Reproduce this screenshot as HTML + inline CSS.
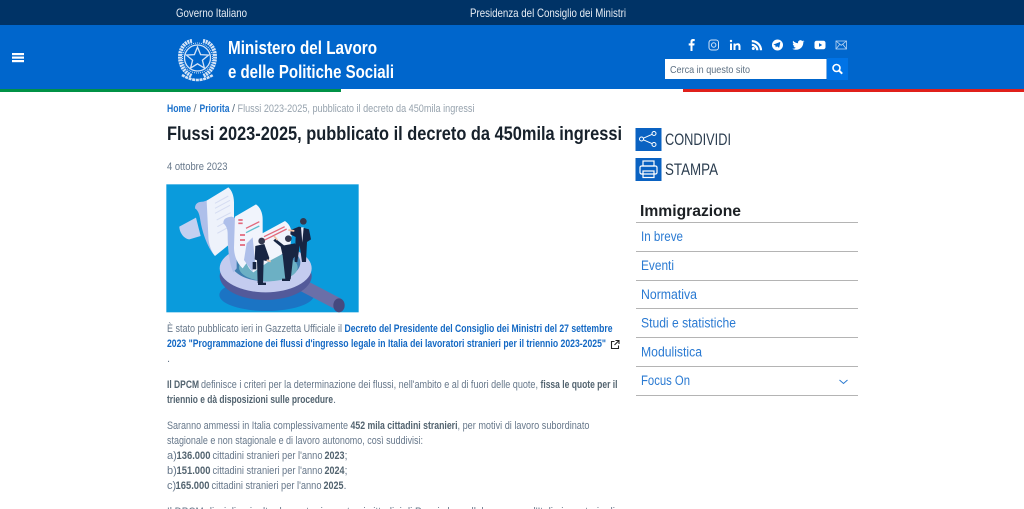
<!DOCTYPE html>
<html lang="it"><head><meta charset="utf-8"><title>Flussi 2023-2025, pubblicato il decreto da 450mila ingressi</title>
<style>
html,body{margin:0;padding:0;background:#fff;width:1024px;height:509px;overflow:hidden}
svg{display:block;filter:blur(.3px)}
text{font-family:"Liberation Sans",sans-serif;white-space:pre}
.b{font-size:11px;fill:#66778a}
.k{font-size:11px;font-weight:bold;fill:#52636f}
.l{font-size:11px;font-weight:bold;fill:#1469c4}
.n{font-size:13.5px;fill:#2a7ad2}
</style></head><body>
<svg width="1024" height="509" viewBox="0 0 1024 509" xmlns="http://www.w3.org/2000/svg">
<rect width="1024" height="25" fill="#003366"/>
<rect y="25" width="1024" height="64" fill="#0066cc"/>
<rect y="89" width="341" height="3" fill="#009246"/>
<rect x="683" y="89" width="341" height="3" fill="#e0201b"/>
<g font-size="12">
<text x="176" y="17" textLength="71" lengthAdjust="spacingAndGlyphs" fill="#e8eef5">Governo Italiano</text>
<text x="470" y="17" textLength="156" lengthAdjust="spacingAndGlyphs" fill="#e8eef5">Presidenza del Consiglio dei Ministri</text>
</g>
<g fill="#fff"><rect x="12" y="53" width="12" height="2.200"/><rect x="12" y="56.500" width="12" height="2.200"/><rect x="12" y="60" width="12" height="2.200"/></g>
<!-- emblem -->
<g fill="none" stroke="#d5e4f7">
<circle cx="197.500" cy="58" r="13" stroke-width="1.300"/>
<circle cx="197.500" cy="58" r="15" stroke-width="1" stroke-dasharray="1 1"/>
<path d="M197.500 47l3.100 7.600 8 .5-6.200 5.100 2 7.900-6.900-4.300-6.900 4.300 2-7.900-6.200-5.100 8-.5z" stroke-width="1.300"/>
<path d="M192 41c-8 1-12 8-12 16 0 9 5 16 12 19M203 41c8 1 12 8 12 16 0 9-5 16-12 19" stroke-width="4" stroke-dasharray="2 .7"/>
<path d="M182 75c5 3 10 5 15.500 5s10.500-2 15.500-5" stroke-width="2.600" stroke-dasharray="3 .7"/>
</g>
<text x="228" y="54" font-size="18" font-weight="bold" fill="#fff" textLength="149" lengthAdjust="spacingAndGlyphs">Ministero del Lavoro</text>
<text x="228" y="78" font-size="18" font-weight="bold" fill="#fff" textLength="166" lengthAdjust="spacingAndGlyphs">e delle Politiche Sociali</text>
<!-- social -->
<g fill="#fff">
<path d="M690.500 51v-5.500h-1.800v-2.100h1.800v-1.700c0-1.800 1-2.700 2.600-2.700h1.600v2.100h-1.100c-.8 0-1.100.4-1.100 1v1.300h2.100l-.3 2.100h-1.800V51z"/>
<rect x="730" y="43.500" width="2" height="6.500"/><circle cx="731" cy="41" r="1.200"/>
<path d="M733.500 43.500h2v1c.5-.8 1.300-1.200 2.300-1.200 2 0 2.700 1.300 2.700 3.200v3.500h-2v-3.100c0-1-.3-1.800-1.300-1.800s-1.700.7-1.700 1.800v3.100h-2z"/>
<circle cx="753.300" cy="48.500" r="1.500"/>
<path d="M751.800 43.700v2.200a4.400 4.400 0 0 1 4.400 4.400h2.200a6.600 6.600 0 0 0-6.600-6.600z"/>
<path d="M751.800 40v2.200a8.100 8.100 0 0 1 8.100 8.100h2.200A10.300 10.300 0 0 0 751.800 40z"/>
<path fill-rule="evenodd" d="M777.500 39.500a5.500 5.500 0 1 0 0 11 5.500 5.500 0 0 0 0-11zm2.800 2.700l-1 5c-.1.400-.4.500-.7.300l-1.600-1.200-.8.800c-.2.200-.4.200-.5 0l-.3-1.700-1.500-.5c-.4-.1-.4-.4 0-.5l5.800-2.300c.4-.1.700.1.600.6z"/>
<path d="M804 41.300c-.4.200-.9.300-1.400.4.500-.3.900-.8 1.100-1.300-.5.300-1 .5-1.500.6a2.400 2.400 0 0 0-4.100 2.200c-2-.1-3.800-1-5-2.500-.6 1.100-.3 2.500.8 3.200-.4 0-.8-.1-1.100-.3 0 1.200.8 2.200 1.900 2.400-.4.100-.7.100-1.100 0 .3 1 1.200 1.700 2.300 1.700a4.900 4.900 0 0 1-3.600 1c1.100.7 2.400 1.100 3.800 1.100 4.700 0 7.200-3.900 7.200-7.200v-.3c.4-.3.800-.7 1.100-1.100z"/>
<path fill-rule="evenodd" d="M816.500 40.800h7c1.100 0 2 .9 2 2v4.400c0 1.100-.9 2-2 2h-7c-1.100 0-2-.9-2-2v-4.400c0-1.100.9-2 2-2zm2.500 2.300v3.800l3.200-1.900z"/>
</g>
<g fill="none" stroke="#fff">
<rect x="709" y="40" width="9.500" height="10" rx="2.500" stroke-width="1" stroke="#d5e4f7"/><circle cx="713.700" cy="45" r="2.200" stroke-width="1" stroke="#d5e4f7"/>
<g stroke="#b8d4f2" stroke-width=".8"><rect x="836" y="41" width="10.500" height="8"/><path d="M836 41l5.200 4.300 5.300-4.300M836 49l3.800-4.800M846.500 49l-3.800-4.800"/></g>
</g>
<!-- search -->
<rect x="665" y="59" width="161.500" height="20" fill="#fff"/>
<rect x="827" y="58" width="21" height="22" fill="#0073e6"/>
<text x="670" y="73" font-size="10.500" fill="#5c6f82" textLength="80" lengthAdjust="spacingAndGlyphs">Cerca in questo sito</text>
<circle cx="836.500" cy="68" r="3.500" fill="none" stroke="#fff" stroke-width="1.600"/><path d="M839 70.500l3.200 3.200" stroke="#fff" stroke-width="2"/>
<!-- breadcrumb -->
<g font-size="11">
<text x="167" y="112" fill="#1c72cc" font-weight="bold" textLength="24" lengthAdjust="spacingAndGlyphs">Home</text>
<text x="193.500" y="112" fill="#5f7182">/</text>
<text x="199.500" y="112" fill="#1c72cc" font-weight="bold" textLength="30" lengthAdjust="spacingAndGlyphs">Priorita</text>
<text x="232" y="112" fill="#5f7182">/</text>
<text x="237.500" y="112" fill="#97a3ae" textLength="237" lengthAdjust="spacingAndGlyphs">Flussi 2023-2025, pubblicato il decreto da 450mila ingressi</text>
</g>
<text x="167" y="140" font-size="19.500" font-weight="bold" fill="#17212b" textLength="455" lengthAdjust="spacingAndGlyphs">Flussi 2023-2025, pubblicato il decreto da 450mila ingressi</text>
<text x="167" y="170" class="b" textLength="60.500" lengthAdjust="spacingAndGlyphs">4 ottobre 2023</text>
<!-- illustration -->
<g transform="translate(160 180) scale(.33333)">
<rect x="19" y="13" width="577" height="384" fill="#0a9bdc"/>
<ellipse cx="320" cy="345" rx="142" ry="48" fill="#1b74c4"/>
<path d="M420 312L535 372" stroke="#6a6fa8" stroke-width="36"/>
<ellipse cx="537" cy="376" rx="17" ry="21" fill="#45497f"/>
<ellipse cx="317" cy="288" rx="138" ry="72" fill="#535a9a"/>
<ellipse cx="317" cy="265" rx="138" ry="72" fill="#c4ccef"/>
<ellipse cx="317" cy="248" rx="104" ry="56" fill="#3f7fb0"/>
<ellipse cx="325" cy="262" rx="88" ry="42" fill="#6cb0c4"/>
<path d="M58 140l50-27 14 55-34 10c-15 0-30-20-30-38z" fill="#c3d0f1"/>
<path d="M105 85c0-15 10-20 25-20l30-10v135l5 38c-25-28-40-78-45-113-3-18-8-25-15-30z" fill="#aebfea"/>
<path d="M140 62l65-40c10 8 17 25 17 45v115l-57 46c-10-12-20-35-20-60z" fill="#eef2fb"/>
<path d="M165 70l40-22M165 85l45-24M165 100l45-24M170 120l42-22M172 140l40-22M172 160l40-22" stroke="#d5dcf2" stroke-width="3"/>
<path d="M190 130c0-15 10-18 25-20l15 5v150l-10 12c-10-20-17-60-17-115 0-15-4-25-13-32z" fill="#aebfea"/>
<path d="M225 110l63-37c12 8 20 25 20 45v65l-60 82c-14-12-26-35-26-62z" fill="#f1f4fc"/>
<path d="M235 120h13M235 130h13M240 165h15M240 180h15M240 195h15" stroke="#e2697c" stroke-width="5"/>
<path d="M258 145l40-20" stroke="#e2697c" stroke-width="4"/><path d="M258 158l40-20" stroke="#5fbfd0" stroke-width="4"/>
<path d="M298 165l77-42c12 8 20 22 20 40l-5 47-60 32-50 35c-15-10-25-30-25-55 0-20 15-35 43-57z" fill="#f1f4fc"/>
<path d="M312 170l62-30M310 182l70-35" stroke="#e2697c" stroke-width="4"/>
<path d="M278 172l-18 18-8 50 25 35 8-30z" fill="#aebfea"/>
<g fill="#172543">
<circle cx="305" cy="183" r="10" fill="#33384f"/>
<path d="M286 198l27-6 15 42-4 10-13-3-2 68h-16l-2-68-7-3z"/>
<path d="M294 308h24v7h-24z"/>
<rect x="278" y="246" width="11" height="22"/>
<circle cx="385" cy="176" r="10" fill="#33384f"/>
<path d="M340 182l6-6 26 20 33-6 11 28-17 18-7 62h-16l-8-72-6-26z"/>
<path d="M366 296h24v7h-24z"/>
<circle cx="430" cy="124" r="10" fill="#33384f"/>
<path d="M392 150l25-10 30 8 6 30-12 8-3 60h-12l-7-50-7 50h-8l3-75-16-8z"/>
</g>
<path d="M423 142l8 0-4 45z" fill="#e8ecf8"/>
<path d="M342 168l10 12M320 240l12 5M385 150l18 3" stroke="#f2c3a6" stroke-width="5"/>
</g>
<!-- body -->
<text x="167" y="332" class="b" textLength="175" lengthAdjust="spacingAndGlyphs">È stato pubblicato ieri in Gazzetta Ufficiale il</text>
<text x="344.500" y="332" class="l" textLength="268" lengthAdjust="spacingAndGlyphs">Decreto del Presidente del Consiglio dei Ministri del 27 settembre</text>
<text x="167" y="347" class="l" textLength="439" lengthAdjust="spacingAndGlyphs">2023 "Programmazione dei flussi d'ingresso legale in Italia dei lavoratori stranieri per il triennio 2023-2025"</text>
<path d="M614.500 341.500h-3v7h7v-3M615.500 340.500h3.500v3.500M619 340.500l-4.500 4.500" fill="none" stroke="#222" stroke-width="1.100"/>
<text x="167" y="362" class="b">.</text>
<text x="167" y="388" class="k" textLength="32" lengthAdjust="spacingAndGlyphs">Il DPCM</text>
<text x="201" y="388" class="b" textLength="337" lengthAdjust="spacingAndGlyphs">definisce i criteri per la determinazione dei flussi, nell'ambito e al di fuori delle quote,</text>
<text x="540.500" y="388" class="k" textLength="77" lengthAdjust="spacingAndGlyphs">fissa le quote per il</text>
<text x="167" y="403" class="k" textLength="166" lengthAdjust="spacingAndGlyphs">triennio e dà disposizioni sulle procedure</text>
<text x="333" y="403" class="b">.</text>
<text x="167" y="429" class="b" textLength="181" lengthAdjust="spacingAndGlyphs">Saranno ammessi in Italia complessivamente</text>
<text x="350.500" y="429" class="k" textLength="107" lengthAdjust="spacingAndGlyphs">452 mila cittadini stranieri</text>
<text x="457.500" y="429" class="b" textLength="132" lengthAdjust="spacingAndGlyphs">, per motivi di lavoro subordinato</text>
<text x="167" y="444" class="b" textLength="256" lengthAdjust="spacingAndGlyphs">stagionale e non stagionale e di lavoro autonomo, così suddivisi:</text>
<text x="167" y="459" class="b">a)</text><text x="176.500" y="459" class="k" textLength="34" lengthAdjust="spacingAndGlyphs">136.000</text><text x="212.500" y="459" class="b" textLength="110" lengthAdjust="spacingAndGlyphs">cittadini stranieri per l'anno</text><text x="324.500" y="459" class="k" textLength="20" lengthAdjust="spacingAndGlyphs">2023</text><text x="344.500" y="459" class="b">;</text>
<text x="167" y="474" class="b">b)</text><text x="176.500" y="474" class="k" textLength="34" lengthAdjust="spacingAndGlyphs">151.000</text><text x="212.500" y="474" class="b" textLength="110" lengthAdjust="spacingAndGlyphs">cittadini stranieri per l'anno</text><text x="324.500" y="474" class="k" textLength="20" lengthAdjust="spacingAndGlyphs">2024</text><text x="344.500" y="474" class="b">;</text>
<text x="167" y="489" class="b">c)</text><text x="175.500" y="489" class="k" textLength="34" lengthAdjust="spacingAndGlyphs">165.000</text><text x="211.500" y="489" class="b" textLength="110" lengthAdjust="spacingAndGlyphs">cittadini stranieri per l'anno</text><text x="323.500" y="489" class="k" textLength="20" lengthAdjust="spacingAndGlyphs">2025</text><text x="343.500" y="489" class="b">.</text>
<text x="167" y="515" class="b" textLength="448" lengthAdjust="spacingAndGlyphs">Il DPCM disciplina inoltre le quote riservate ai cittadini di Paesi che collaborano con l'Italia in materia di</text>
<!-- sidebar -->
<rect x="635.500" y="128" width="26" height="23" fill="#0a62c2"/>
<g fill="none" stroke="#fff" stroke-width="1"><circle cx="641.500" cy="139" r="2"/><circle cx="654" cy="133.500" r="2"/><circle cx="654" cy="144.500" r="2"/><path d="M643.400 138.200l8.800-3.900M643.400 139.800l8.800 3.900"/></g>
<rect x="635.500" y="158" width="26" height="23" fill="#0a62c2"/>
<g fill="none" stroke="#fff" stroke-width="1.200"><rect x="643" y="161" width="11" height="5"/><rect x="640" y="166" width="17" height="8" rx="1.500"/><rect x="643" y="171" width="11" height="6.500"/></g>
<text x="665" y="145" font-size="16.500" fill="#2c3e50" textLength="66" lengthAdjust="spacingAndGlyphs">CONDIVIDI</text>
<text x="665" y="175" font-size="16.500" fill="#2c3e50" textLength="53" lengthAdjust="spacingAndGlyphs">STAMPA</text>
<text x="640" y="216" font-size="15.500" font-weight="bold" fill="#1c2024" textLength="101" lengthAdjust="spacingAndGlyphs">Immigrazione</text>
<g fill="#b4b4b4"><rect x="636" y="222" width="222" height="1"/><rect x="636" y="251" width="222" height="1"/><rect x="636" y="280" width="222" height="1"/><rect x="636" y="308" width="222" height="1"/><rect x="636" y="337" width="222" height="1"/><rect x="636" y="366" width="222" height="1"/><rect x="636" y="395" width="222" height="1"/></g>
<text x="641" y="241" class="n" textLength="42" lengthAdjust="spacingAndGlyphs">In breve</text>
<text x="641" y="270" class="n" textLength="33" lengthAdjust="spacingAndGlyphs">Eventi</text>
<text x="641" y="299" class="n" textLength="56" lengthAdjust="spacingAndGlyphs">Normativa</text>
<text x="641" y="327.500" class="n" textLength="95" lengthAdjust="spacingAndGlyphs">Studi e statistiche</text>
<text x="641" y="356.500" class="n" textLength="61" lengthAdjust="spacingAndGlyphs">Modulistica</text>
<text x="641" y="385" class="n" textLength="49" lengthAdjust="spacingAndGlyphs">Focus On</text>
<path d="M839.500 380l4 3.500 4-3.500" fill="none" stroke="#2a7ad0" stroke-width="1"/>
</svg>
</body></html>
